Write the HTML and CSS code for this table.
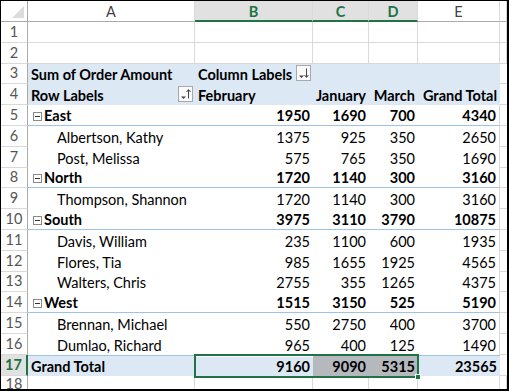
FILE: index.html
```html
<!DOCTYPE html>
<html lang="en">
<head>
    <meta charset="UTF-8">
    <title>Sum of Order Amount - PivotTable</title>
    <link rel="stylesheet" href="styles.css">
</head>
<body>
<div class="frame">
    <div class="sheet">
        <div class="row head">
            <div class="corner"></div>
            <div class="col">A</div>
            <div class="col on">B</div>
            <div class="col on">C</div>
            <div class="col on">D</div>
            <div class="col">E</div>
            <div class="col"></div>
        </div>

        <div class="row grid">
            <div class="rn">1</div>
            <div class="c"></div><div class="c"></div><div class="c"></div><div class="c"></div><div class="c"></div><div class="c"></div>
        </div>
        <div class="row grid">
            <div class="rn">2</div>
            <div class="c"></div><div class="c"></div><div class="c"></div><div class="c"></div><div class="c"></div><div class="c"></div>
        </div>

        <div class="row pv band">
            <div class="rn">3</div>
            <div class="c b">Sum of Order Amount</div>
            <div class="c b">Column Labels
                <span class="fbtn">
                    <svg width="13" height="14" viewBox="0 0 13 14"><path d="M2 9.5h5l-2.5 2.5z" fill="#444"/><path d="M9.5 2.5v8.5M7.5 9l2 2.5 2-2.5" fill="none" stroke="#444" stroke-width="1"/></svg>
                </span>
            </div>
            <div class="c"></div><div class="c"></div><div class="c"></div>
            <div class="c"></div>
        </div>
        <div class="row pv band">
            <div class="rn">4</div>
            <div class="c b">Row Labels
                <span class="fbtn end">
                    <svg width="13" height="14" viewBox="0 0 13 14"><path d="M2 9.5h5l-2.5 2.5z" fill="#444"/><path d="M9.5 3v8.5M7.5 5l2-2.5 2 2.5" fill="none" stroke="#444" stroke-width="1"/></svg>
                </span>
            </div>
            <div class="c b">February</div>
            <div class="c b n">January</div>
            <div class="c b n">March</div>
            <div class="c b n">Grand Total</div>
            <div class="c"></div>
        </div>

        <div class="row pv grp">
            <div class="rn">5</div>
            <div class="c"><span class="tog"></span>East</div>
            <div class="c n">1950</div><div class="c n">1690</div><div class="c n">700</div><div class="c n">4340</div>
            <div class="c"></div>
        </div>
        <div class="row pv">
            <div class="rn">6</div>
            <div class="c item">Albertson, Kathy</div>
            <div class="c n">1375</div><div class="c n">925</div><div class="c n">350</div><div class="c n">2650</div>
            <div class="c"></div>
        </div>
        <div class="row pv">
            <div class="rn">7</div>
            <div class="c item">Post, Melissa</div>
            <div class="c n">575</div><div class="c n">765</div><div class="c n">350</div><div class="c n">1690</div>
            <div class="c"></div>
        </div>
        <div class="row pv grp">
            <div class="rn">8</div>
            <div class="c"><span class="tog"></span>North</div>
            <div class="c n">1720</div><div class="c n">1140</div><div class="c n">300</div><div class="c n">3160</div>
            <div class="c"></div>
        </div>
        <div class="row pv">
            <div class="rn">9</div>
            <div class="c item">Thompson, Shannon</div>
            <div class="c n">1720</div><div class="c n">1140</div><div class="c n">300</div><div class="c n">3160</div>
            <div class="c"></div>
        </div>
        <div class="row pv grp">
            <div class="rn">10</div>
            <div class="c"><span class="tog"></span>South</div>
            <div class="c n">3975</div><div class="c n">3110</div><div class="c n">3790</div><div class="c n">10875</div>
            <div class="c"></div>
        </div>
        <div class="row pv">
            <div class="rn">11</div>
            <div class="c item">Davis, William</div>
            <div class="c n">235</div><div class="c n">1100</div><div class="c n">600</div><div class="c n">1935</div>
            <div class="c"></div>
        </div>
        <div class="row pv">
            <div class="rn">12</div>
            <div class="c item">Flores, Tia</div>
            <div class="c n">985</div><div class="c n">1655</div><div class="c n">1925</div><div class="c n">4565</div>
            <div class="c"></div>
        </div>
        <div class="row pv">
            <div class="rn">13</div>
            <div class="c item">Walters, Chris</div>
            <div class="c n">2755</div><div class="c n">355</div><div class="c n">1265</div><div class="c n">4375</div>
            <div class="c"></div>
        </div>
        <div class="row pv grp">
            <div class="rn">14</div>
            <div class="c"><span class="tog"></span>West</div>
            <div class="c n">1515</div><div class="c n">3150</div><div class="c n">525</div><div class="c n">5190</div>
            <div class="c"></div>
        </div>
        <div class="row pv">
            <div class="rn">15</div>
            <div class="c item">Brennan, Michael</div>
            <div class="c n">550</div><div class="c n">2750</div><div class="c n">400</div><div class="c n">3700</div>
            <div class="c"></div>
        </div>
        <div class="row pv">
            <div class="rn">16</div>
            <div class="c item">Dumlao, Richard</div>
            <div class="c n">965</div><div class="c n">400</div><div class="c n">125</div><div class="c n">1490</div>
            <div class="c"></div>
        </div>
        <div class="row pv band total">
            <div class="rn on">17</div>
            <div class="c">Grand Total</div>
            <div class="c n active">9160</div><div class="c n picked">9090</div><div class="c n picked">5315</div><div class="c n">23565</div>
            <div class="c"></div>
        </div>

        <div class="row grid last">
            <div class="rn">18</div>
            <div class="c"></div><div class="c"></div><div class="c"></div><div class="c"></div><div class="c"></div><div class="c"></div>
        </div>

        <!-- selected range B17:D17 -->
        <div class="selection"><span class="handle"></span></div>
    </div>
</div>
</body>
</html>
```

FILE: styles.css
```css
:root {
    --cols: 27px 167px 118px 56px 49px 82px 7px;
    --grid-line: #d9d9d9;
    --head-line: #ababab;
    --band: #dde8f5;
    --band-line: #9dc3e6;
    --excel-green: #217346;
}

* {
    margin: 0;
    padding: 0;
    box-sizing: border-box;
}

body {
    font-family: Lato, "Open Sans", sans-serif;
    font-size: 14.5px;
    color: #000;
    background: #fff;
}

.frame {
    width: 509px;
    height: 391px;
    border: solid #000;
    border-width: 1px 2px 2px 1px;
    overflow: hidden;
}

.sheet {
    position: relative;
    width: 506px;
}

.row {
    display: grid;
    grid-template-columns: var(--cols);
    height: 20.8px;
}

/* column headers */
.head {
    height: 21px;
}

.corner {
    position: relative;
    border-right: 1px solid var(--head-line);
    border-bottom: 1px solid var(--head-line);
}

.corner::after {
    content: "";
    position: absolute;
    right: 3px;
    bottom: 3px;
    width: 12px;
    height: 12px;
    background: #dcdcdc;
    clip-path: polygon(100% 0, 100% 100%, 0 100%);
}

.col {
    display: flex;
    align-items: center;
    justify-content: center;
    padding-top: 1px;
    color: #444;
    border-right: 1px solid var(--grid-line);
    border-bottom: 1px solid var(--head-line);
}

.col.on {
    background: #e1e1e1;
    color: var(--excel-green);
    font-weight: 700;
    border-bottom: 2px solid var(--excel-green);
}

/* row numbers */
.rn {
    display: flex;
    align-items: flex-end;
    justify-content: center;
    padding-bottom: 2px;
    line-height: 17px;
    color: #555;
    border-right: 1px solid var(--head-line);
    border-bottom: 1px solid var(--grid-line);
}

.last .rn {
    align-items: flex-start;
    padding: 0;
    line-height: 15px;
}

.rn.on {
    background: #e1e1e1;
    color: var(--excel-green);
    font-weight: 700;
    border-right: 2px solid var(--excel-green);
}

/* cells */
.c {
    display: flex;
    align-items: flex-end;
    padding: 0 3px 1px;
    line-height: 17px;
    white-space: nowrap;
}

.c.n {
    justify-content: flex-end;
}

.c.b {
    font-weight: 700;
}

.c.item {
    padding-left: 29px;
}

.grid .c {
    border-right: 1px solid var(--grid-line);
    border-bottom: 1px solid var(--grid-line);
}

.pv .c:nth-child(6) {
    border-right: 1px solid var(--grid-line);
}

.pv .c:nth-child(7) {
    border-bottom: 1px solid var(--grid-line);
}

.band .c:not(:nth-child(7)) {
    background: var(--band);
}

.band .c:nth-child(6) {
    border-right: none;
}

.grp .c,
.total .c {
    font-weight: 700;
}

.grp .c:not(:nth-child(7)) {
    border-bottom: 1px solid var(--band-line);
}

.total .c:not(:nth-child(7)) {
    border-top: 1px solid var(--band-line);
}

.tog {
    width: 9px;
    height: 9px;
    margin: 0 2px 3px 2px;
    border: 1px solid #8a8a8a;
    background: #fff;
    position: relative;
    flex-shrink: 0;
}

.tog::after {
    content: "";
    position: absolute;
    left: 1px;
    right: 1px;
    top: 3px;
    height: 1px;
    background: #333;
}

.fbtn {
    display: flex;
    align-items: center;
    justify-content: center;
    width: 15px;
    height: 16px;
    margin: 0 0 2px 4px;
    border: 1px solid #a9a9a9;
    background: #fafafa;
}

.fbtn.end {
    margin-left: auto;
    margin-right: -1px;
}

.active {
    box-shadow: inset 1px 1px 0 #fff;
}

.picked {
    background: #b5b9be !important;
}

.selection {
    position: absolute;
    left: 193px;
    top: 352.8px;
    width: 225px;
    height: 23.8px;
    border: 2px solid var(--excel-green);
    pointer-events: none;
}

.handle {
    position: absolute;
    right: -4px;
    bottom: -4px;
    width: 6px;
    height: 6px;
    background: var(--excel-green);
    border: 1px solid #fff;
}
```
